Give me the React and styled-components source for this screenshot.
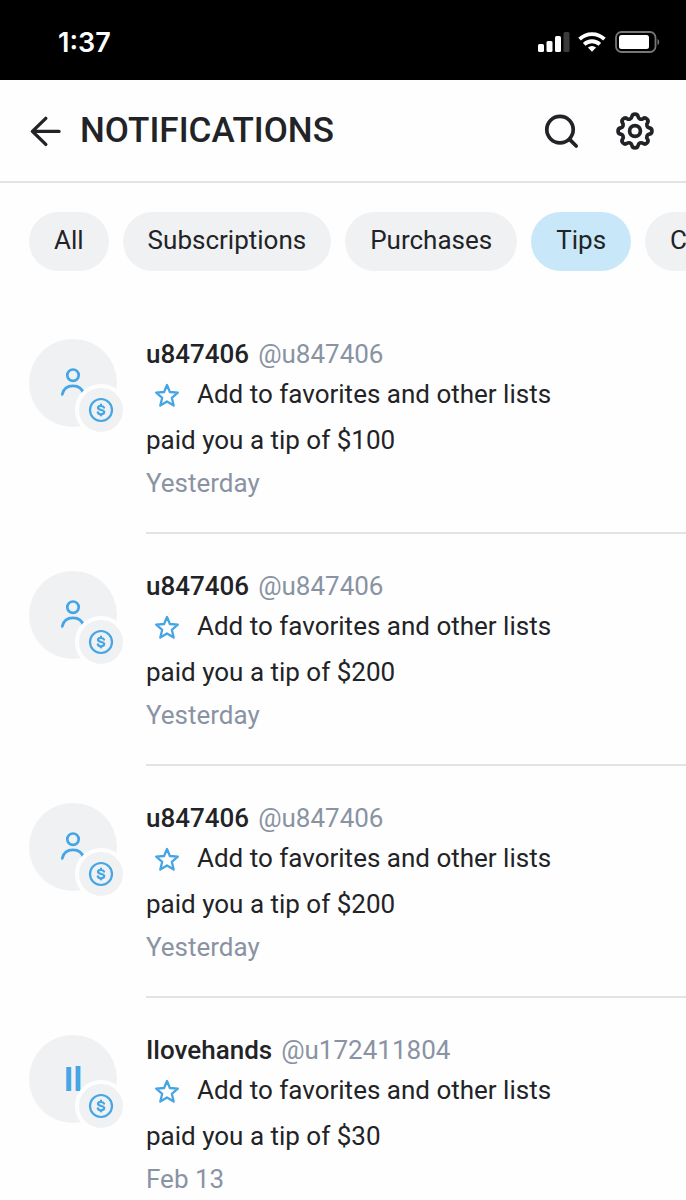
import { createGlobalStyle, styled } from "styled-components";

const TABS = ["All", "Subscriptions", "Purchases", "Tips", "Comments"];

const NOTIFICATIONS = [
  { id: 1, name: "u847406", handle: "@u847406", amount: "$100", date: "Yesterday" },
  { id: 2, name: "u847406", handle: "@u847406", amount: "$200", date: "Yesterday" },
  { id: 3, name: "u847406", handle: "@u847406", amount: "$200", date: "Yesterday" },
  { id: 4, name: "Ilovehands", handle: "@u172411804", amount: "$30", date: "Feb 13", initials: "Il" },
];

const gearPoint = (degrees) => {
  const angle = (degrees * Math.PI) / 180;
  const x = 20 + 14.6 * Math.cos(angle);
  const y = 20 + 14.6 * Math.sin(angle);
  return `${x.toFixed(2)} ${y.toFixed(2)}`;
};

// eight round teeth, each followed by a round notch
const gearPath = () => {
  let d = `M${gearPoint(-12.5)}`;
  for (let i = 0; i < 8; i++) {
    d += `A3.2 3.2 0 0 1 ${gearPoint(i * 45 + 12.5)}`;
    d += `A3 3 0 0 0 ${gearPoint(i * 45 + 32.5)}`;
  }
  return `${d}Z`;
};

const GEAR = gearPath();

const StatusIcons = () => (
  <svg width="124" height="24" viewBox="0 0 124 24" aria-hidden="true">
    <g fill="#fff">
      <rect x="1" y="14" width="6" height="8" rx="1.5" />
      <rect x="9.5" y="11" width="6" height="11" rx="1.5" />
      <rect x="18" y="6" width="6" height="16" rx="1.5" />
      <rect x="26.5" y="2" width="6" height="20" rx="1.5" fill="#3a3a3c" />
      <path d="M55 21.8L50.9 17.6a6 6 0 0 1 8.2 0Z" />
      <rect x="82" y="5" width="30" height="14" rx="2.5" />
    </g>
    <g fill="none" stroke="#fff" strokeWidth="3.8">
      <path d="M42.6 9.2a17.6 17.6 0 0 1 24.8 0" />
      <path d="M47.2 14.4a11.2 11.2 0 0 1 15.6 0" />
    </g>
    <rect x="79" y="2" width="39.5" height="20" rx="5.5" fill="none" stroke="#77777a" strokeWidth="1.8" />
    <path d="M120.5 8.7a4 4 0 0 1 0 6.6Z" fill="#77777a" />
  </svg>
);

const BackIcon = () => (
  <svg width="34" height="34" viewBox="0 0 34 34" aria-hidden="true">
    <path
      d="M17.8 4.4L4.4 17.4l13.4 13M4.8 17.4H31"
      fill="none"
      stroke="#222326"
      strokeWidth="3.4"
      strokeLinecap="round"
      strokeLinejoin="round"
    />
  </svg>
);

const SearchIcon = () => (
  <svg width="40" height="40" viewBox="0 0 40 40" aria-hidden="true">
    <g fill="none" stroke="#222326" strokeWidth="3.7" strokeLinecap="round">
      <circle cx="18" cy="18.6" r="13.2" />
      <path d="M27.6 28.4L34.2 35" />
    </g>
  </svg>
);

const GearIcon = () => (
  <svg width="40" height="40" viewBox="0 0 40 40" aria-hidden="true">
    <g fill="none" stroke="#222326" strokeWidth="3.7" strokeLinejoin="round">
      <path d={GEAR} />
      <circle cx="20" cy="20" r="5.4" />
    </g>
  </svg>
);

const UserIcon = () => (
  <svg width="28" height="32" viewBox="0 0 28 32" aria-hidden="true">
    <g fill="none" stroke="#46a5e5" strokeWidth="2.7" strokeLinecap="round">
      <circle cx="14" cy="8.2" r="5.7" />
      <path d="M3.2 27.4C4.4 21.4 8.6 18.8 14 18.8s9.4 2.2 10.8 8.6" />
    </g>
  </svg>
);

const TipIcon = () => (
  <svg width="26" height="26" viewBox="0 0 26 26" aria-hidden="true">
    <g fill="none" stroke="#46a5e5" strokeWidth="2.2" strokeLinecap="round">
      <circle cx="13" cy="13" r="11" />
      <path d="M16 10.6c-.4-1.2-1.5-1.8-3-1.8-1.8 0-3 .7-3 2 0 3.1 6.2 1.3 6.2 4.3 0 1.5-1.3 2.2-3.2 2.2-1.7 0-2.9-.7-3.2-2M13 7.6v1M13 17.4v1" />
    </g>
  </svg>
);

const StarIcon = () => (
  <svg width="26" height="28" viewBox="0 0 26 28" aria-hidden="true">
    <path
      d="M13 5L15.9 12L23.8 12.6L17.8 17.8L19.7 25.6L13 21.5L6.3 25.6L8.2 17.8L2.2 12.6L10.1 12Z"
      fill="none"
      stroke="#46a5e5"
      strokeWidth="2.3"
      strokeLinejoin="round"
    />
  </svg>
);

const Notification = ({ item }) => (
  <ItemStyled>
    <AvatarStyled>
      {item.initials || <UserIcon />}
      <BadgeStyled>
        <TipIcon />
      </BadgeStyled>
    </AvatarStyled>
    <ItemBodyStyled>
      <UserRowStyled>
        <NameStyled href="#user">{item.name}</NameStyled>
        <HandleStyled href="#user">{item.handle}</HandleStyled>
      </UserRowStyled>
      <FavoriteButtonStyled type="button">
        <StarIcon />
        Add to favorites and other lists
      </FavoriteButtonStyled>
      <MessageStyled>paid you a tip of {item.amount}</MessageStyled>
      <DateStyled>{item.date}</DateStyled>
    </ItemBodyStyled>
  </ItemStyled>
);

const App = () => {
  return (
    <PageStyled>
      <GlobalStyle />
      <StatusBarStyled>
        <span>1:37</span>
        <StatusIcons />
      </StatusBarStyled>
      <HeaderStyled>
        <IconButtonStyled type="button" aria-label="Back">
          <BackIcon />
        </IconButtonStyled>
        <TitleStyled>NOTIFICATIONS</TitleStyled>
        <ActionsStyled>
          <IconButtonStyled type="button" aria-label="Search">
            <SearchIcon />
          </IconButtonStyled>
          <IconButtonStyled type="button" aria-label="Settings">
            <GearIcon />
          </IconButtonStyled>
        </ActionsStyled>
      </HeaderStyled>
      <TabsStyled>
        {TABS.map((tab) => (
          <TabStyled key={tab} type="button" $active={tab === "Tips"}>
            {tab}
          </TabStyled>
        ))}
      </TabsStyled>
      <ListStyled>
        {NOTIFICATIONS.map((item) => (
          <Notification key={item.id} item={item} />
        ))}
      </ListStyled>
    </PageStyled>
  );
};
export default App;

const GlobalStyle = createGlobalStyle`
  * {
    box-sizing: border-box;
  }
  body {
    margin: 0;
    background: #fefefe;
    color: #222326;
    font-family: Roboto, "Liberation Sans", sans-serif;
    font-size: 26px;
  }
  button {
    border: none;
    padding: 0;
    background: none;
    color: inherit;
    font: inherit;
    cursor: pointer;
  }
  a {
    color: inherit;
    text-decoration: none;
  }
  svg {
    display: block;
    flex: none;
  }
`;

const PageStyled = styled.div`
  display: flex;
  flex-direction: column;
  height: 100vh;
  overflow: hidden;
`;

const StatusBarStyled = styled.div`
  display: flex;
  flex: none;
  align-items: center;
  justify-content: space-between;
  height: 80px;
  padding: 4px 25px 0 58px;
  background: #000;
  color: #fff;
  font-family: Inter, "Liberation Sans", sans-serif;
  font-size: 27px;
  font-weight: 600;
`;

const HeaderStyled = styled.header`
  display: flex;
  flex: none;
  align-items: center;
  height: 103px;
  padding: 1px 31px 0 28px;
  border-bottom: 2px solid #e2e3e5;
`;

const TitleStyled = styled.h1`
  flex: 1;
  margin: 0 0 0 18px;
  font-size: 35px;
  font-weight: 500;
  line-height: 40px;
`;

const ActionsStyled = styled.div`
  display: flex;
  gap: 33px;
`;

const IconButtonStyled = styled.button`
  display: flex;
`;

const TabsStyled = styled.nav`
  display: flex;
  flex: none;
  gap: 14px;
  padding: 29px 0 0 29px;
  overflow: hidden;
`;

const TabStyled = styled.button`
  flex: none;
  height: 59px;
  && {
    padding: 0 25px 4px;
  }
  border-radius: 30px;
  background: ${(props) => (props.$active ? "#c8e8fa" : "#f0f1f3")};
`;

const ListStyled = styled.ul`
  flex: 1;
  min-height: 0;
  margin: 0;
  padding: 31px 0 0 29px;
  list-style: none;
  overflow-y: auto;
  scrollbar-width: none;
`;

const ItemStyled = styled.li`
  display: flex;
  gap: 29px;
  padding-top: 37px;
`;

const AvatarStyled = styled.div`
  position: relative;
  display: flex;
  flex: none;
  align-items: center;
  justify-content: center;
  width: 88px;
  height: 88px;
  border-radius: 50%;
  background: #f0f1f3;
  color: #46a5e5;
  font-size: 33px;
  font-weight: 700;
`;

const BadgeStyled = styled.span`
  position: absolute;
  top: 45px;
  left: 46px;
  display: flex;
  align-items: center;
  justify-content: center;
  width: 52px;
  height: 52px;
  border: 4px solid #fefefe;
  border-radius: 50%;
  background: #f0f1f3;
`;

const ItemBodyStyled = styled.div`
  flex: 1;
  min-width: 0;
  padding-bottom: 27px;
  border-bottom: 2px solid #e2e3e5;
`;

const UserRowStyled = styled.div`
  display: flex;
  gap: 9px;
  line-height: 30px;
`;

const NameStyled = styled.a`
  font-weight: 500;
`;

const HandleStyled = styled.a`
  color: #8a93a3;
`;

const FavoriteButtonStyled = styled.button`
  display: flex;
  align-items: center;
  gap: 17px;
  line-height: 50px;
  && {
    padding-left: 8px;
  }
`;

const MessageStyled = styled.p`
  margin: 0;
  line-height: 42px;
`;

const DateStyled = styled.p`
  margin: 0;
  color: #8a93a3;
  line-height: 44px;
`;
